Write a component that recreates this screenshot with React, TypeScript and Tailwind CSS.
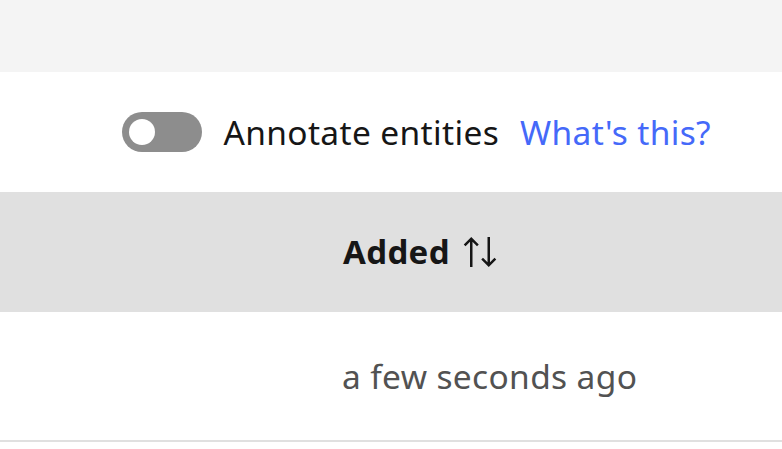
import { useState } from "react";

function ArrowsVertical() {
  return (
    <svg
      xmlns="http://www.w3.org/2000/svg"
      width="40"
      height="40"
      viewBox="0 0 32 32"
      fill="currentColor"
      aria-hidden
    >
      <path d="M27.6 20.6L24 24.2 24 4 22 4 22 24.2 18.4 20.6 17 22 23 28 29 22zM9 4L3 10 4.4 11.4 8 7.8 8 28 10 28 10 7.8 13.6 11.4 15 10z" />
    </svg>
  );
}

export default function App() {
  const [annotate, setAnnotate] = useState(false);

  return (
    <div className="flex min-h-[449px] w-[782px] flex-col bg-white font-['Noto_Sans',sans-serif] tracking-[0.35px]">
      <div className="h-[72px] bg-[#f4f4f4]" />

      <div className="flex h-[120px] items-center justify-end gap-[21px] pr-[71px]">
        <div className="flex items-center gap-[21px]">
          <button
            type="button"
            role="switch"
            aria-checked={annotate}
            onClick={() => setAnnotate((v) => !v)}
            className={`flex h-[40px] w-[80px] items-center rounded-full px-[7px] ${
              annotate ? "justify-end bg-[#24a148]" : "justify-start bg-[#8d8d8d]"
            }`}
          >
            <span className="block h-[26px] w-[26px] rounded-full bg-white" />
          </button>
          <span className="text-[33.5px] text-[#161616]">Annotate entities</span>
        </div>
        <a href="#" className="text-[33.5px] text-[#4569f9]">
          What's this?
        </a>
      </div>

      <div className="grid h-[120px] grid-cols-[343px_1fr] items-center bg-[#e0e0e0]">
        <div />
        <div className="flex items-center gap-[10px] text-[#161616]">
          <span className="text-[33px] font-bold">Added</span>
          <ArrowsVertical />
        </div>
      </div>

      <div className="grid h-[130px] grid-cols-[342px_1fr] items-center border-b-2 border-[#e0e0e0]">
        <div />
        <span className="text-[33.5px] text-[#525252]">a few seconds ago</span>
      </div>
    </div>
  );
}
